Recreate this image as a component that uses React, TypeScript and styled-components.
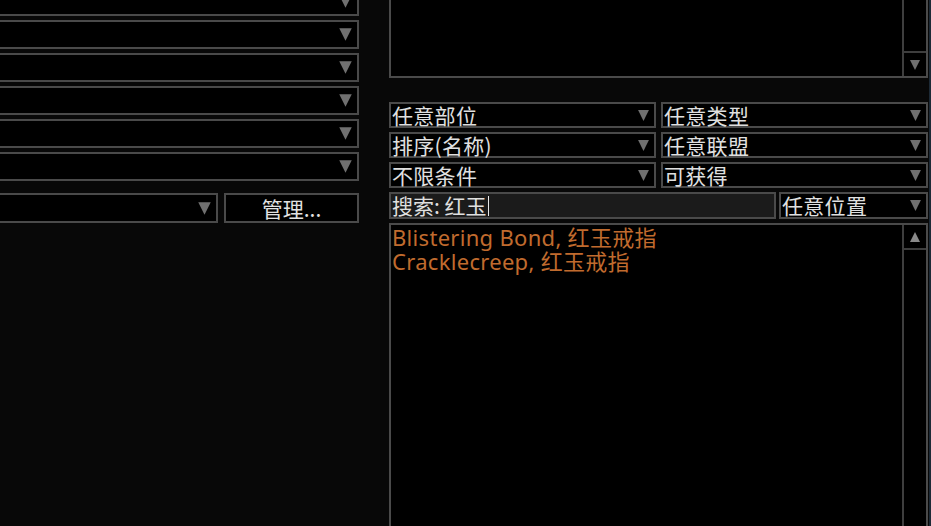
import React from 'react';
import styled, { createGlobalStyle } from 'styled-components';

const GlobalStyle = createGlobalStyle`
  html, body {
    margin: 0;
    padding: 0;
    background: #080808;
  }
  body {
    font-family: "Noto Sans", "Noto Sans CJK SC", sans-serif;
    color: #d8d8d8;
  }
`;

const Page = styled.div`
  display: flex;
  width: 931px;
  height: 526px;
  overflow: hidden;
  background: #080808;
  box-sizing: border-box;
  border-right: 2px solid #1d2a36;
`;

const LeftColumn = styled.div`
  width: 363px;
  margin-left: -4px;
  margin-top: -13px;
  display: flex;
  flex-direction: column;
  gap: 4px;
  flex-shrink: 0;
`;

const RightColumn = styled.div`
  margin-left: 30px;
  width: 539px;
  display: flex;
  flex-direction: column;
  flex-shrink: 0;
`;

const Select = styled.div<{ $h?: number }>`
  box-sizing: border-box;
  height: ${(p) => p.$h ?? 26}px;
  border: 2px solid #4a4a4a;
  background: #000;
  display: flex;
  align-items: center;
  justify-content: space-between;
  padding: 0 4px 0 1px;
  font-family: "Noto Sans CJK SC", sans-serif;
  font-size: 21px;
  line-height: 1;
  color: #e0e0e0;
  white-space: nowrap;
`;

const SelectLabel = styled.span`
  letter-spacing: 0.3px;
`;

const ManageButton = styled.div`
  box-sizing: border-box;
  height: 30px;
  width: 135px;
  border: 2px solid #4a4a4a;
  background: #000;
  display: flex;
  align-items: center;
  justify-content: center;
  font-family: "Noto Sans CJK SC", sans-serif;
  font-size: 21px;
  line-height: 1;
  color: #e2e2e2;
`;

const BottomRow = styled.div`
  display: flex;
  gap: 6px;
  margin-top: 8px;
`;

const TopList = styled.div`
  box-sizing: border-box;
  height: 78px;
  border: 2px solid #4a4a4a;
  border-top: none;
  background: #000;
  display: flex;
  justify-content: flex-end;
`;

const ScrollTrack = styled.div<{ $up?: boolean }>`
  width: 22px;
  border-left: 2px solid #3e3e3e;
  display: flex;
  flex-direction: column;
  justify-content: ${(p) => (p.$up ? 'flex-start' : 'flex-end')};
`;

const ScrollButton = styled.div<{ $up?: boolean }>`
  height: 23px;
  display: flex;
  align-items: center;
  justify-content: center;
  ${(p) => (p.$up ? 'border-bottom' : 'border-top')}: 2px solid #3e3e3e;
`;

const FilterGrid = styled.div`
  margin-top: 24px;
  display: grid;
  grid-template-columns: 267px 267px;
  column-gap: 5px;
  row-gap: 4px;
`;

const SearchRow = styled.div`
  margin-top: 4px;
  display: grid;
  grid-template-columns: 387px 149px;
  column-gap: 3px;
`;

const SearchInput = styled.div`
  box-sizing: border-box;
  height: 27px;
  border: 2px solid #4a4a4a;
  background: #1b1b1b;
  display: flex;
  align-items: center;
  padding-left: 1px;
  font-family: "Noto Sans CJK SC", sans-serif;
  font-size: 21px;
  line-height: 1;
  color: #e0e0e0;
  white-space: nowrap;
`;

const Caret = styled.span`
  display: inline-block;
  width: 1px;
  height: 20px;
  margin-left: 1px;
  background: #e8e8e8;
`;

const Results = styled.div`
  margin-top: 4px;
  flex: 1;
  box-sizing: border-box;
  border: 2px solid #4a4a4a;
  border-bottom: none;
  background: #000;
  display: flex;
`;

const ResultList = styled.div`
  flex: 1;
  padding: 0 1px;
  font-family: "Noto Sans", "Noto Sans CJK SC", sans-serif;
  font-size: 22px;
  line-height: 24px;
  letter-spacing: 0.3px;
  color: #c06b2e;
`;

const ResultItem = styled.div`
  white-space: nowrap;
`;

const Arrow = ({ size = 13, up = false }: { size?: number; up?: boolean }) => (
  <svg width={size} height={size} viewBox="0 0 12 12">
    <polygon points={up ? '1,11 11,11 6,1' : '1,1 11,1 6,11'} fill={up ? '#8a8a8a' : '#707070'} />
  </svg>
);

const leftRows = [0, 1, 2, 3, 4, 5];

const filters = ['任意部位', '任意类型', '排序(名称)', '任意联盟', '不限条件', '可获得'];

const results = ['Blistering Bond, 红玉戒指', 'Cracklecreep, 红玉戒指'];

export default function App() {
  return (
    <>
      <GlobalStyle />
      <Page>
        <LeftColumn>
          {leftRows.map((i) => (
            <Select key={i} $h={29}>
              <span />
              <Arrow size={15} />
            </Select>
          ))}
          <BottomRow>
            <Select $h={30} style={{ flex: 1 }}>
              <span />
              <Arrow size={15} />
            </Select>
            <ManageButton>管理...</ManageButton>
          </BottomRow>
        </LeftColumn>
        <RightColumn>
          <TopList>
            <ScrollTrack>
              <ScrollButton>
                <Arrow size={12} />
              </ScrollButton>
            </ScrollTrack>
          </TopList>
          <FilterGrid>
            {filters.map((f) => (
              <Select key={f}>
                <SelectLabel>{f}</SelectLabel>
                <Arrow />
              </Select>
            ))}
          </FilterGrid>
          <SearchRow>
            <SearchInput>
              搜索: 红玉
              <Caret />
            </SearchInput>
            <Select $h={27}>
              <SelectLabel>任意位置</SelectLabel>
              <Arrow />
            </Select>
          </SearchRow>
          <Results>
            <ResultList>
              {results.map((r) => (
                <ResultItem key={r}>{r}</ResultItem>
              ))}
            </ResultList>
            <ScrollTrack $up>
              <ScrollButton $up>
                <Arrow size={12} up />
              </ScrollButton>
            </ScrollTrack>
          </Results>
        </RightColumn>
      </Page>
    </>
  );
}
